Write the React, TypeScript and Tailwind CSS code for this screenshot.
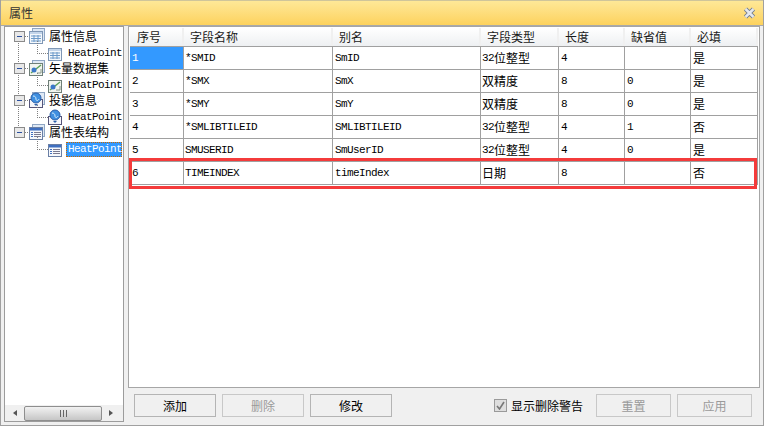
const cjk = "font-['Noto_Sans_CJK_SC','Liberation_Sans',sans-serif] text-[12px]";
const mono = "font-['Liberation_Mono','DejaVu_Sans_Mono',monospace] text-[11px] tracking-[-0.6px]";

const columns = ["序号", "字段名称", "别名", "字段类型", "长度", "缺省值", "必填"];

const rows = [
  ["1", "*SMID", "SmID", "32位整型", "4", "", "是"],
  ["2", "*SMX", "SmX", "双精度", "8", "0", "是"],
  ["3", "*SMY", "SmY", "双精度", "8", "0", "是"],
  ["4", "*SMLIBTILEID", "SMLIBTILEID", "32位整型", "4", "1", "否"],
  ["5", "SMUSERID", "SmUserID", "32位整型", "4", "0", "是"],
  ["6", "TIMEINDEX", "timeIndex", "日期", "8", "", "否"],
];

const tree = [
  { label: "属性信息", icon: "table" },
  { label: "矢量数据集", icon: "vector" },
  { label: "投影信息", icon: "globe" },
  { label: "属性表结构", icon: "list" },
];

// latin runs are half the width of the cjk ones, like the bitmap font in the shot
function Mixed({ text }: { text: string }) {
  const parts = text.match(/[\x00-\x7f]+|[^\x00-\x7f]+/g) ?? [];
  return (
    <>
      {parts.map((p, i) => (
        <span key={i} className={/^[\x00-\x7f]/.test(p) ? mono : cjk}>
          {p}
        </span>
      ))}
    </>
  );
}

function NodeIcon({ kind, small }: { kind: string; small?: boolean }) {
  return (
    <svg width="16" height="16" viewBox="0 0 16 16" className="shrink-0">
      {!small && <rect x="3.5" y="0.5" width="12" height="12" fill="#dfe9f5" stroke="#8fa6c4" />}
      {kind === "table" && (
        <g>
          <rect x="0.5" y="3.5" width="13" height="12" fill="#f4f8fc" stroke="#7f97b5" />
          <rect x="1" y="4" width="12" height="2" fill="#c3d5ea" />
          <path d="M2 8h10M2 10.5h10M2 13h10M5 7v7M9 7v7" stroke="#6d9ac9" strokeWidth="1" />
        </g>
      )}
      {kind === "vector" && (
        <g>
          <rect x="0.5" y="3.5" width="13" height="12" fill="#f2f5f0" stroke="#6f7f78" />
          <path d="M2 13L12 5" stroke="#5aa05a" strokeWidth="1.5" />
          <circle cx="5" cy="10" r="2.5" fill="#3b78c8" />
          <path d="M8 13h4v-4" stroke="#8a9a8a" fill="none" />
        </g>
      )}
      {kind === "globe" && (
        <g>
          <rect x="0.5" y="7.5" width="13" height="8" fill="#f6f6fa" stroke="#55557a" />
          <circle cx="7" cy="6" r="5" fill="#3f8fe0" stroke="#2c5fa8" />
          <path d="M4 4c2 0 3 1 3 3s2 2 3 0" stroke="#d8efff" fill="none" />
          <path d="M5 12l2 2 2-2z" fill="#2c5fa8" />
        </g>
      )}
      {kind === "list" && (
        <g>
          <rect x="0.5" y="3.5" width="13" height="12" fill="#f6f8fc" stroke="#6a7fa5" />
          <rect x="1" y="4" width="12" height="2.5" fill="#3f6fc0" />
          <path d="M5 8.5h7M5 10.5h7M5 12.5h7" stroke="#7a7a90" />
          <path d="M2 8.5h2M2 10.5h2M2 12.5h2" stroke="#3f6fc0" />
        </g>
      )}
    </svg>
  );
}

function TreeGroup({ label, icon, active, last }: { label: string; icon: string; active?: boolean; last?: boolean }) {
  return (
    <div className="relative">
      {!last && <div className="absolute left-[13px] top-[8px] h-[32px] border-l border-dotted border-[#808080]" />}
      <div className="relative flex h-[16px] items-center">
        <div className="absolute left-[19px] w-[4px] border-t border-dotted border-[#808080]" />
        <div className="relative ml-[9px] mr-[4px] flex h-[11px] w-[11px] items-center justify-center border border-[#8a8a8a] bg-[#e8e8e8]">
          <div className="h-[1px] w-[5px] bg-[#2a4f9e]" />
        </div>
        <NodeIcon kind={icon} />
        <span className={`${cjk} ml-[4px] leading-none text-black`}>{label}</span>
      </div>
      <div className="relative flex h-[16px] items-center pl-[43px] pt-[2px]">
        <div className="absolute left-[32px] top-[-3px] h-[13px] w-[11px] border-b border-l border-dotted border-[#808080]" />
        <NodeIcon kind={icon} small />
        <span
          className={`${mono} ml-[2px] h-[15px] w-[56px] whitespace-nowrap ${
            active
              ? "border border-dotted border-[#c86a00] bg-[#3399ff] pl-[1px] leading-[13px] text-white"
              : "pl-[2px] leading-[15px] text-black"
          }`}
        >
          HeatPoint
        </span>
      </div>
    </div>
  );
}

function Btn({ label, disabled, width }: { label: string; disabled?: boolean; width: string }) {
  return (
    <button
      className={`${cjk} h-[23px] ${width} border bg-[#f0f0f0] ${
        disabled ? "border-[#c8c8c8] text-[#9a9a9a]" : "border-[#b4b4b4] text-black"
      }`}
    >
      {label}
    </button>
  );
}

export default function App() {
  return (
    <div className="flex h-[426px] w-[764px] flex-col overflow-hidden border-x border-b border-[#a0a0a0] bg-[#f0f0f0]">
      <div className="flex h-[26px] shrink-0 items-center justify-between border-b border-t border-b-[#a9a9a9] border-t-[#cfc59a] bg-gradient-to-b from-[#fee897] to-[#fdd25c] pl-[8px] pr-[7px]">
        <span className={`${cjk} text-[#333]`}>属性</span>
        <svg width="13" height="12" viewBox="0 0 13 12">
          <path d="M2.5 2l8 8M10.5 2l-8 8" stroke="#6f7a8c" strokeWidth="4.5" />
          <path d="M2.5 2l8 8M10.5 2l-8 8" stroke="#e4e8ee" strokeWidth="2.5" />
        </svg>
      </div>
      <div className="flex min-h-0 flex-1 gap-[4px] px-[3px] pb-[3px]">
        <div className="flex w-[120px] shrink-0 flex-col border border-[#9c9c9c] bg-white">
          <div className="min-h-0 flex-1 pt-[1px]">
            {tree.map((t, i) => (
              <TreeGroup key={t.label} label={t.label} icon={t.icon} active={i === 3} last={i === 3} />
            ))}
          </div>
          <div className="flex h-[16px] items-center bg-[#f0f0f0] px-[1px]">
            <svg width="18" height="16" viewBox="0 0 18 16">
              <path d="M11 5v6l-4-3z" fill="#555" />
            </svg>
            <div className="flex h-[15px] w-[78px] items-center justify-center rounded-[2px] border border-[#8e8e8e] bg-gradient-to-b from-[#f2f2f2] to-[#c6c6c6]">
              <div className="h-[7px] w-[7px] border-x border-[#666] bg-[linear-gradient(90deg,transparent_2px,#666_2px,#666_3px,transparent_3px)]" />
            </div>
            <svg width="18" height="16" viewBox="0 0 18 16">
              <path d="M7 5v6l4-3z" fill="#555" />
            </svg>
          </div>
        </div>

        <div className="flex min-w-0 flex-1 flex-col">
          <div className="relative h-[362px] border border-[#a6a6a6] bg-white pl-[1px] pt-[1px]">
            <div className="grid grid-cols-[54px_149px_148px_78px_66px_66px_67px]">
              {columns.map((c, i) => (
                <div
                  key={c}
                  className={`${cjk} flex h-[18px] items-center border-r-2 border-[#f0f0f0] bg-gradient-to-b from-white to-[#eef0f2] ${
                    i === 0 ? "pl-[7px]" : "pl-[6px]"
                  } leading-none text-[#1a1a1a]`}
                >
                  {c}
                </div>
              ))}
              {rows.map((row) =>
                row.map((cell, i) => (
                  <div
                    key={`${row[0]}-${i}`}
                    className={`flex h-[23px] items-center border-r border-t border-[#a0a0a0] ${
                      i === 1 || i === 3 ? "pl-[1px]" : "pl-[2px]"
                    } ${i === 0 && row[0] === "1" ? "bg-[#3399ff] text-white" : "text-black"}`}
                  >
                    <Mixed text={cell} />
                  </div>
                )),
              )}
              <div className="col-span-7 h-[1px] bg-[#a0a0a0]" />
            </div>
            <div className="absolute left-[0px] top-[131px] h-[31px] w-[628px] border-[3px] border-[#f43b3b]" />
          </div>
          <div className="flex items-center pl-[6px] pr-[8px] pt-[6px]">
            <div className="flex gap-[6px]">
              <Btn label="添加" width="w-[82px]" />
              <Btn label="删除" width="w-[82px]" disabled />
              <Btn label="修改" width="w-[82px]" />
            </div>
            <label className="ml-auto mr-[13px] flex items-center gap-[4px]">
              <span className="flex h-[13px] w-[13px] items-center justify-center border border-[#9a9a9a] bg-[#dedede]">
                <svg width="9" height="9" viewBox="0 0 9 9">
                  <path d="M1 5l2.5 3L8 1" stroke="#777" strokeWidth="1.6" fill="none" />
                </svg>
              </span>
              <span className={`${cjk} text-black`}>显示删除警告</span>
            </label>
            <div className="flex gap-[6px]">
              <Btn label="重置" width="w-[75px]" disabled />
              <Btn label="应用" width="w-[75px]" disabled />
            </div>
          </div>
        </div>
      </div>
    </div>
  );
}
